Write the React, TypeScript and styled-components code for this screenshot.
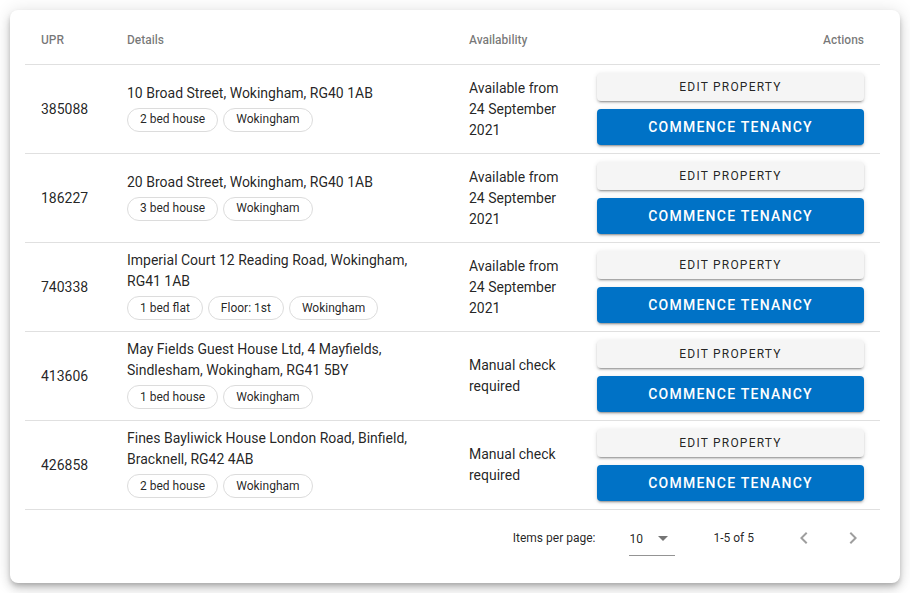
import React from "react";
import styled, { createGlobalStyle } from "styled-components";

const GlobalStyle = createGlobalStyle`
  html, body {
    margin: 0;
    padding: 0;
    background: #ffffff;
    font-family: Roboto, "Liberation Sans", sans-serif;
  }
`;

type Property = {
  upr: string;
  address: string;
  tags: string[];
  availability: string;
};

const properties: Property[] = [
  {
    upr: "385088",
    address: "10 Broad Street, Wokingham, RG40 1AB",
    tags: ["2 bed house", "Wokingham"],
    availability: "Available from 24 September 2021",
  },
  {
    upr: "186227",
    address: "20 Broad Street, Wokingham, RG40 1AB",
    tags: ["3 bed house", "Wokingham"],
    availability: "Available from 24 September 2021",
  },
  {
    upr: "740338",
    address: "Imperial Court 12 Reading Road, Wokingham, RG41 1AB",
    tags: ["1 bed flat", "Floor: 1st", "Wokingham"],
    availability: "Available from 24 September 2021",
  },
  {
    upr: "413606",
    address: "May Fields Guest House Ltd, 4 Mayfields, Sindlesham, Wokingham, RG41 5BY",
    tags: ["1 bed house", "Wokingham"],
    availability: "Manual check required",
  },
  {
    upr: "426858",
    address: "Fines Bayliwick House London Road, Binfield, Bracknell, RG42 4AB",
    tags: ["2 bed house", "Wokingham"],
    availability: "Manual check required",
  },
];

const Page = styled.div`
  padding: 10px;
`;

const Card = styled.div`
  width: 890px;
  height: 573px;
  box-sizing: border-box;
  background: #fff;
  border-radius: 8px;
  padding: 0 20px 17px 15px;
  box-shadow: 0 3px 5px -1px rgba(0, 0, 0, 0.2), 0 6px 10px 0 rgba(0, 0, 0, 0.14),
    0 1px 18px 0 rgba(0, 0, 0, 0.12);
`;

const Row = styled.div<{ $header?: boolean }>`
  display: grid;
  grid-template-columns: 86px 342px 128px 1fr;
  align-items: center;
  min-height: ${(p) => (p.$header ? "54px" : "88px")};
  border-bottom: 1px solid #e0e0e0;
`;

const HeadCell = styled.div<{ $right?: boolean }>`
  padding: 6px 16px 0;
  font-size: 12px;
  font-weight: 500;
  color: rgba(0, 0, 0, 0.54);
  text-align: ${(p) => (p.$right ? "right" : "left")};
`;

const Cell = styled.div`
  padding: 0 16px;
  font-size: 14px;
  line-height: 21px;
  color: rgba(0, 0, 0, 0.87);
`;

const Chips = styled.div`
  display: flex;
  flex-wrap: wrap;
  gap: 5px;
  margin: 4px 0 4px;
`;

const Chip = styled.span`
  display: inline-flex;
  align-items: center;
  height: 22px;
  padding: 0 12px;
  border: 1px solid #dcdcdc;
  border-radius: 12px;
  font-size: 12px;
  color: rgba(0, 0, 0, 0.87);
`;

const Actions = styled.div`
  padding: 0 16px;
  display: flex;
  flex-direction: column;
  gap: 8px;
`;

const EditButton = styled.button`
  height: 28px;
  border: none;
  border-radius: 4px;
  background: #f5f5f5;
  font-family: inherit;
  font-size: 12px;
  font-weight: 400;
  letter-spacing: 1.2px;
  color: rgba(0, 0, 0, 0.87);
  box-shadow: 0 3px 1px -2px rgba(0, 0, 0, 0.2), 0 2px 2px 0 rgba(0, 0, 0, 0.14),
    0 1px 5px 0 rgba(0, 0, 0, 0.12);
`;

const PrimaryButton = styled.button`
  height: 36px;
  border: none;
  border-radius: 4px;
  background: #0072c6;
  font-family: inherit;
  font-size: 14px;
  font-weight: 500;
  letter-spacing: 1.25px;
  color: #fff;
  box-shadow: 0 3px 1px -2px rgba(0, 0, 0, 0.2), 0 2px 2px 0 rgba(0, 0, 0, 0.14),
    0 1px 5px 0 rgba(0, 0, 0, 0.12);
`;

const Paginator = styled.div`
  height: 56px;
  display: flex;
  align-items: center;
  justify-content: flex-end;
  padding-right: 7px;
  font-size: 12px;
  color: rgba(0, 0, 0, 0.54);
`;

const PageLabel = styled.span`
  color: rgba(0, 0, 0, 0.87);
`;

const Select = styled.div`
  margin-left: 34px;
  width: 46px;
  height: 34px;
  box-sizing: border-box;
  margin-top: 2px;
  display: flex;
  align-items: center;
  justify-content: space-between;
  border-bottom: 1px solid rgba(0, 0, 0, 0.42);
  color: rgba(0, 0, 0, 0.87);
  padding-right: 7px;
`;

const Arrow = styled.span`
  width: 0;
  height: 0;
  border-left: 5px solid transparent;
  border-right: 5px solid transparent;
  border-top: 5px solid rgba(0, 0, 0, 0.54);
`;

const Range = styled.span`
  margin-left: 38px;
  margin-right: 30px;
  color: rgba(0, 0, 0, 0.87);
`;

const NavButton = styled.button`
  width: 40px;
  height: 40px;
  border: none;
  background: transparent;
  display: flex;
  align-items: center;
  justify-content: center;
  padding: 0;
  color: rgba(0, 0, 0, 0.38);
  & + & {
    margin-left: 9px;
  }
`;

const Chevron = ({ dir }: { dir: "left" | "right" }) => (
  <svg width="24" height="24" viewBox="0 0 24 24" fill="currentColor">
    {dir === "left" ? (
      <path d="M15.41 7.41 14 6l-6 6 6 6 1.41-1.41L10.83 12z" />
    ) : (
      <path d="M10 6 8.59 7.41 13.17 12l-4.58 4.59L10 18l6-6z" />
    )}
  </svg>
);

export default function App() {
  return (
    <Page>
      <GlobalStyle />
      <Card>
        <Row $header>
          <HeadCell>UPR</HeadCell>
          <HeadCell>Details</HeadCell>
          <HeadCell>Availability</HeadCell>
          <HeadCell $right>Actions</HeadCell>
        </Row>
        {properties.map((p) => (
          <Row key={p.upr}>
            <Cell>{p.upr}</Cell>
            <Cell>
              <div>{p.address}</div>
              <Chips>
                {p.tags.map((t) => (
                  <Chip key={t}>{t}</Chip>
                ))}
              </Chips>
            </Cell>
            <Cell>{p.availability}</Cell>
            <Actions>
              <EditButton>EDIT PROPERTY</EditButton>
              <PrimaryButton>COMMENCE TENANCY</PrimaryButton>
            </Actions>
          </Row>
        ))}
        <Paginator>
          <PageLabel>Items per page:</PageLabel>
          <Select>
            <span>10</span>
            <Arrow />
          </Select>
          <Range>1-5 of 5</Range>
          <NavButton>
            <Chevron dir="left" />
          </NavButton>
          <NavButton>
            <Chevron dir="right" />
          </NavButton>
        </Paginator>
      </Card>
    </Page>
  );
}
